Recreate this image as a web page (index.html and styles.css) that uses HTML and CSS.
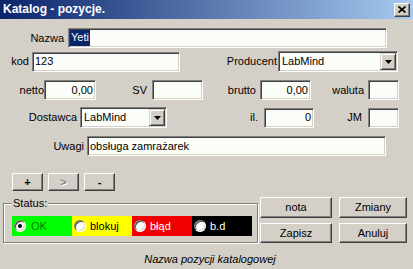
FILE: index.html
```html
<!DOCTYPE html>
<html>
<head>
<meta charset="utf-8">
<link rel="stylesheet" href="styles.css">
</head>
<body>
<div class="window">
  <div class="titlebar">
    <span class="title">Katalog - pozycje.</span>
    <span class="close"><svg width="8" height="7" viewBox="0 0 8 7"><path d="M0.5 0.5 L7.5 6.5 M7.5 0.5 L0.5 6.5" stroke="#000" stroke-width="1.7" fill="none"/></svg></span>
  </div>
  <div class="content">
    <div class="row r1">
      <span class="lbl l-nazwa">Nazwa</span>
      <div class="field f-nazwa"><span class="sel">Yeti</span></div>
    </div>
    <div class="row r2">
      <span class="lbl l-kod">kod</span>
      <div class="field f-kod">123</div>
      <span class="lbl l-prod">Producent</span>
      <div class="field select s-prod"><span>LabMind</span><span class="drop"><svg width="7" height="4" viewBox="0 0 7 4"><path d="M0 0 H7 L3.5 4 Z" fill="#000"/></svg></span></div>
    </div>
    <div class="row r3">
      <span class="lbl l-netto">netto</span>
      <div class="field num f-netto">0,00</div>
      <span class="lbl l-sv">SV</span>
      <div class="field f-sv"></div>
      <span class="lbl l-brutto">brutto</span>
      <div class="field num f-brutto">0,00</div>
      <span class="lbl l-waluta">waluta</span>
      <div class="field f-small"></div>
    </div>
    <div class="row r4">
      <span class="lbl l-dost">Dostawca</span>
      <div class="field select s-dost"><span>LabMind</span><span class="drop"><svg width="7" height="4" viewBox="0 0 7 4"><path d="M0 0 H7 L3.5 4 Z" fill="#000"/></svg></span></div>
      <span class="lbl l-il">il.</span>
      <div class="field num f-il">0</div>
      <span class="lbl l-jm">JM</span>
      <div class="field f-small"></div>
    </div>
    <div class="row r5">
      <span class="lbl l-uwagi">Uwagi</span>
      <div class="field f-uwagi">obsługa zamrażarek</div>
    </div>
    <div class="row r6">
      <button class="btn small">+</button>
      <button class="btn small disabled">&gt;</button>
      <button class="btn small">-</button>
    </div>
    <div class="row bottom">
      <div class="group">
        <span class="group-title">Status:</span>
        <div class="swatches">
          <div class="swatch ok"><span class="radio checked"></span><span class="stxt">OK</span></div>
          <div class="swatch blok"><span class="radio"></span><span class="stxt">blokuj</span></div>
          <div class="swatch err"><span class="radio"></span><span class="stxt">błąd</span></div>
          <div class="swatch bd"><span class="radio"></span><span class="stxt">b.d</span></div>
        </div>
      </div>
      <div class="actions">
        <button class="btn act">nota</button>
        <button class="btn act">Zmiany</button>
        <button class="btn act">Zapisz</button>
        <button class="btn act">Anuluj</button>
      </div>
    </div>
    <div class="footer">Nazwa pozycji katalogowej</div>
  </div>
</div>
</body>
</html>
```
FILE: styles.css
```css
* { box-sizing: border-box; }
html, body { margin: 0; padding: 0; }
body {
  background: #d4d0c8;
  font: 11px/13px "Liberation Sans", Arial, sans-serif;
  color: #000;
  width: 413px;
  height: 269px;
  overflow: hidden;
}
.titlebar {
  height: 19px;
  background: linear-gradient(to right, #0a246a, #a6caf0);
  display: flex;
  align-items: center;
  justify-content: space-between;
  padding: 0 3px 0 3px;
}
.title {
  color: #fff;
  font-weight: bold;
  font-size: 12px;
}
.close {
  width: 16px;
  height: 14px;
  background: #d4d0c8;
  border: 1px solid;
  border-color: #fff #404040 #404040 #fff;
  box-shadow: inset -1px -1px #808080;
  display: flex;
  align-items: center;
  justify-content: center;
}
.content { display: flex; flex-direction: column; }
.row { display: flex; align-items: center; }
.lbl { text-align: right; white-space: nowrap; flex: none; }
.field {
  flex: none;
  height: 20px;
  background: #fbfef8;
  border: 1px solid;
  border-color: #808080 #fff #fff #808080;
  box-shadow: inset 1px 1px #404040, inset -1px -1px #d4d0c8;
  padding: 0 1px 0 2px;
  display: flex;
  align-items: center;
  white-space: nowrap;
}
.num { justify-content: flex-end; padding-right: 2px; }
.select {
  height: 21px;
  justify-content: space-between;
  padding-right: 1px;
  padding-left: 3px;
}
.drop {
  width: 16px;
  height: 17px;
  background: #d4d0c8;
  border: 1px solid;
  border-color: #d4d0c8 #404040 #404040 #d4d0c8;
  box-shadow: inset 1px 1px #fff, inset -1px -1px #808080;
  display: flex;
  align-items: center;
  justify-content: center;
}
.sel {
  background: #0a246a;
  color: #fff;
  margin-left: -1px;
  padding: 1px 1px 2px 1px;
}
.r1 { margin-top: 9px; }
.l-nazwa { width: 64px; margin-right: 4px; }
.f-nazwa { width: 319px; }
.r2 { margin-top: 3px; }
.l-kod { width: 29px; margin-right: 3px; }
.f-kod { width: 148px; }
.l-prod { width: 97px; margin-right: 1px; }
.s-prod { width: 120px; }
.r3 { margin-top: 8px; }
.l-netto { width: 44px; }
.f-netto { width: 52px; }
.l-sv { width: 51px; margin-right: 5px; }
.f-sv { width: 51px; }
.l-brutto { width: 53px; margin-right: 4px; }
.f-brutto { width: 51px; }
.l-waluta { width: 53px; margin-right: 4px; }
.f-small { width: 31px; }
.r4 { margin-top: 7px; }
.l-dost { width: 77px; margin-right: 3px; }
.s-dost { width: 87px; }
.l-il { width: 91px; margin-right: 6px; }
.f-il { width: 50px; }
.l-jm { width: 48px; margin-right: 6px; }
.r5 { margin-top: 8px; }
.l-uwagi { width: 84px; margin-right: 3px; }
.f-uwagi { width: 299px; }
.btn {
  font: 11px/13px "Liberation Sans", Arial, sans-serif;
  color: #000;
  background: #d4d0c8;
  border: 1px solid;
  border-color: #fff #404040 #404040 #fff;
  box-shadow: inset -1px -1px #808080;
  padding: 0;
  margin: 0;
  display: flex;
  align-items: center;
  justify-content: center;
}
.r6 { margin-top: 17px; padding-left: 12px; gap: 5px; }
.small { width: 31px; height: 18px; font-weight: bold; }
.disabled { color: #808080; text-shadow: 1px 1px #fff; }
.bottom { margin-top: 6px; align-items: flex-start; }
.group {
  position: relative;
  margin-top: 6px;
  margin-left: 3px;
  width: 255px;
  height: 40px;
  border: 1px solid #808080;
  box-shadow: inset 1px 1px #fff, 1px 1px #fff;
  padding: 12px 0 0 8px;
}
.group-title {
  position: absolute;
  top: -7px;
  left: 8px;
  padding: 0 1px;
  background: #d4d0c8;
}
.swatches { display: flex; }
.swatch {
  width: 60px;
  height: 20px;
  display: flex;
  align-items: center;
  padding-left: 2px;
  gap: 4px;
}
.ok { background: #00ff00; color: #008000; }
.blok { background: #ffff00; color: #000; }
.err { background: #f00000; color: #fff; }
.bd { background: #000; color: #fff; }
.radio {
  position: relative;
  width: 12px;
  height: 12px;
  border-radius: 50%;
  background: #fff;
  border: 1px solid;
  border-color: #808080 #fff #fff #808080;
  box-shadow: inset 1px 1px #404040, inset -1px -1px #d4d0c8;
  flex: none;
}
.checked::after {
  content: "";
  position: absolute;
  left: 3px;
  top: 3px;
  width: 4px;
  height: 4px;
  border-radius: 50%;
  background: #000;
}
.ok .stxt { margin-left: 1px; }
.actions {
  margin-left: 2px;
  display: grid;
  grid-template-columns: 72px 68px;
  grid-template-rows: 21px 20px;
  column-gap: 7px;
  row-gap: 5px;
}
.act { width: 100%; height: 100%; }
.footer {
  margin-top: 10px;
  text-align: center;
  font-style: italic;
  padding-left: 7px;
}
```
